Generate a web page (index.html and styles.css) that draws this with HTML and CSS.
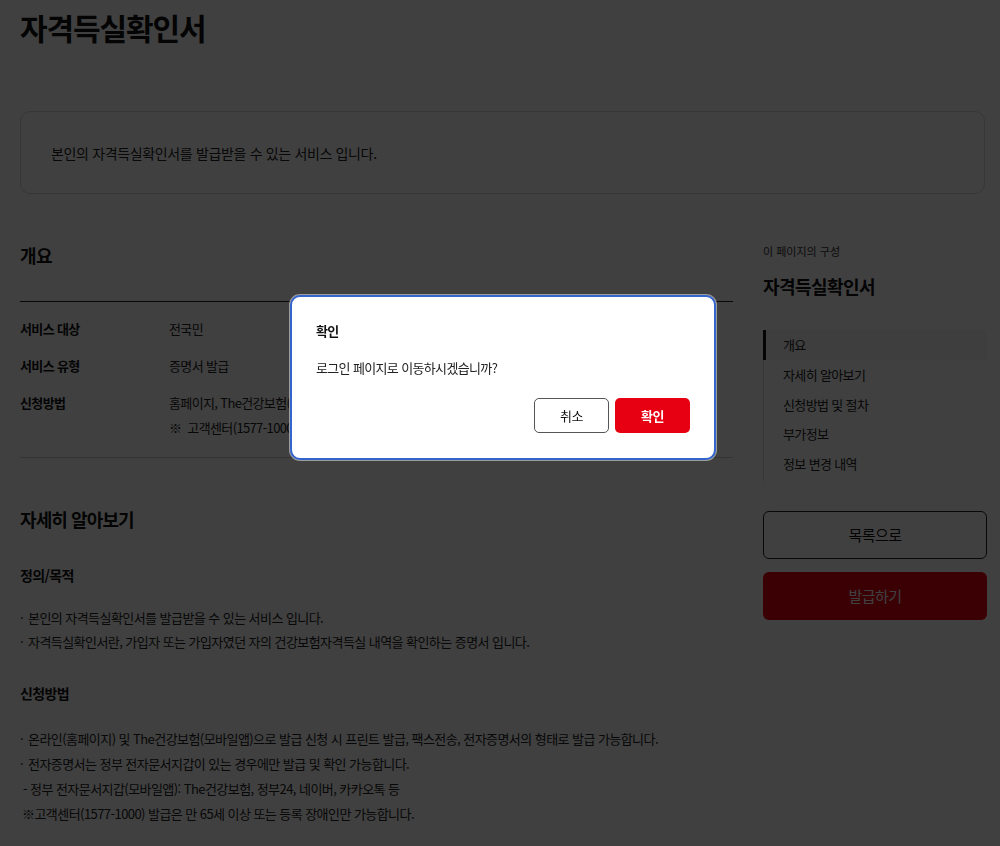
FILE: index.html
```html
<!DOCTYPE html>
<html lang="ko">
<head>
<meta charset="utf-8">
<title>자격득실확인서</title>
<link rel="stylesheet" href="styles.css">
</head>
<body>
<div class="page">
  <h1 class="page-title">자격득실확인서</h1>
  <div class="intro-box">본인의 자격득실확인서를 발급받을 수 있는 서비스 입니다.</div>

  <div class="content">
    <main class="main">
      <h2 class="sec-title">개요</h2>
      <div class="summary">
        <div class="row"><div class="label">서비스 대상</div><div class="value">전국민</div></div>
        <div class="row"><div class="label">서비스 유형</div><div class="value">증명서 발급</div></div>
        <div class="row">
          <div class="label">신청방법</div>
          <div class="value">
            <p>홈페이지, The건강보험(모바일앱), 고객센터</p>
            <p class="second">※ &nbsp;고객센터(1577-1000) 발급은 만 65세 이상 또는 등록 장애인만 가능합니다.</p>
          </div>
        </div>
      </div>

      <h2 class="sec-title big">자세히 알아보기</h2>
      <h3 class="sub-title">정의/목적</h3>
      <ul class="bullets first">
        <li>본인의 자격득실확인서를 발급받을 수 있는 서비스 입니다.</li>
        <li>자격득실확인서란, 가입자 또는 가입자였던 자의 건강보험자격득실 내역을 확인하는 증명서 입니다.</li>
      </ul>
      <h3 class="sub-title sub2">신청방법</h3>
      <ul class="bullets second-list">
        <li>온라인(홈페이지) 및 The건강보험(모바일앱)으로 발급 신청 시 프린트 발급, 팩스전송, 전자증명서의 형태로 발급 가능합니다.</li>
        <li>전자증명서는 정부 전자문서지갑이 있는 경우에만 발급 및 확인 가능합니다.</li>
        <li class="plain dash">- 정부 전자문서지갑(모바일앱): The건강보험, 정부24, 네이버, 카카오톡 등</li>
        <li class="plain">※고객센터(1577-1000) 발급은 만 65세 이상 또는 등록 장애인만 가능합니다.</li>
      </ul>
    </main>

    <aside class="aside">
      <p class="toc-label">이 페이지의 구성</p>
      <p class="toc-title">자격득실확인서</p>
      <ul class="toc">
        <li class="active">개요</li>
        <li>자세히 알아보기</li>
        <li>신청방법 및 절차</li>
        <li>부가정보</li>
        <li>정보 변경 내역</li>
      </ul>
      <button class="btn-line" type="button">목록으로</button>
      <button class="btn-red" type="button">발급하기</button>
    </aside>
  </div>
</div>

<div class="overlay"></div>
<div class="dialog" role="dialog">
  <p class="dlg-title">확인</p>
  <p class="dlg-msg">로그인 페이지로 이동하시겠습니까?</p>
  <div class="dlg-actions">
    <button class="dlg-cancel" type="button">취소</button>
    <button class="dlg-ok" type="button">확인</button>
  </div>
</div>
</body>
</html>
```
FILE: styles.css
```css
* { box-sizing: border-box; }
html, body { margin: 0; padding: 0; }
body {
  font-family: "Noto Sans CJK KR", "Noto Sans", sans-serif;
  color: #1a1a1a;
  background: #fff;
  width: 1000px;
  height: 846px;
  overflow: hidden;
  letter-spacing: -0.04em;
}
p, ul, h1, h2, h3 { margin: 0; padding: 0; }
ul { list-style: none; }

.page { padding: 0 13px 0 20px; }

.page-title {
  font-size: 30px;
  line-height: 44px;
  font-weight: 700;
  letter-spacing: -1.1px;
  padding-top: 5px;
  color: #111;
}

.intro-box {
  margin-top: 62px;
  width: 965px;
  height: 83px;
  border: 1px solid #d6d6d6;
  border-radius: 10px;
  padding: 0 30px;
  display: flex;
  align-items: center;
  font-size: 14px;
  letter-spacing: -0.35px;
  color: #222;
}

.content {
  display: flex;
  gap: 30px;
}

.main { width: 713px; flex: none; }

.sec-title {
  margin-top: 48px;
  font-size: 18px;
  line-height: 26px;
  font-weight: 700;
  color: #111;
}
.sec-title.big {
  margin-top: 48px;
  font-size: 18px;
  line-height: 26px;
  letter-spacing: -0.9px;
}

.summary {
  margin-top: 33px;
  border-top: 1px solid #222;
  border-bottom: 1px solid #d0d0d0;
  padding: 16px 0 18px;
}
.row {
  display: flex;
  font-size: 13px;
  line-height: 22px;
  margin-bottom: 15px;
}
.row:last-child { margin-bottom: 0; }
.label { width: 149px; flex: none; font-weight: 700; color: #111; }
.value { color: #222; white-space: nowrap; }
.value .second { margin-top: 3px; }

.sub-title {
  margin-top: 32px;
  font-size: 14px;
  line-height: 22px;
  font-weight: 700;
  color: #111;
}
.sub-title.sub2 { margin-top: 28px; }

.bullets { font-size: 13px; color: #222; letter-spacing: -0.043em; }
.bullets.first { margin-top: 20px; }
.bullets.first li { line-height: 24px; }
.bullets.second-list { margin-top: 22px; }
.bullets.second-list li { line-height: 25px; }
.bullets li { position: relative; padding-left: 8px; }
.bullets li::before {
  content: "·";
  position: absolute;
  left: 0;
  top: 0;
}
.bullets li.plain { padding-left: 2px; }
.bullets li.dash { padding-left: 3px; }
.bullets li.plain::before { content: none; }

.aside { width: 224px; flex: none; padding-top: 50px; }
.toc-label { font-size: 11px; line-height: 14px; color: #333; letter-spacing: 0; }
.toc-title {
  margin-top: 15px;
  font-size: 18px;
  line-height: 26px;
  font-weight: 700;
  letter-spacing: -0.03em;
  color: #111;
}
.toc {
  margin-top: 31px;
  border-left: 1px solid #d8d8d8;
  padding-bottom: 2px;
}
.toc li {
  font-size: 13px;
  line-height: 29.8px;
  padding-left: 19px;
  color: #222;
}
.toc li.active {
  background: #f6f6f6;
  box-shadow: inset 3px 0 0 #111;
  margin-left: -1px;
  padding-left: 20px;
}

.btn-line, .btn-red {
  display: block;
  width: 224px;
  height: 48px;
  border-radius: 6px;
  font-family: inherit;
  font-size: 15px;
  letter-spacing: -0.04em;
  cursor: pointer;
}
.btn-line {
  margin-top: 30px;
  background: #fff;
  border: 1px solid #222;
  color: #111;
}
.btn-red {
  margin-top: 13px;
  background: #e60012;
  border: none;
  color: #fff;
}

.overlay {
  position: fixed;
  inset: 0;
  background: rgba(0, 0, 0, 0.75);
}

.dialog {
  position: fixed;
  left: 290px;
  top: 295px;
  width: 426px;
  height: 165px;
  background: #fff;
  border: 2px solid #3465cf;
  box-shadow: 0 0 0 1px #9c9c9c;
  border-radius: 10px;
  padding: 24px 24px 0;
}
.dlg-title { font-size: 13px; line-height: 20px; font-weight: 700; color: #111; }
.dlg-msg { margin-top: 17px; font-size: 13px; line-height: 20px; color: #222; letter-spacing: -0.05em; }
.dlg-actions {
  margin-top: 20px;
  display: flex;
  justify-content: flex-end;
  gap: 6px;
}
.dlg-cancel, .dlg-ok {
  width: 75px;
  height: 35px;
  border-radius: 5px;
  font-family: inherit;
  font-size: 13px;
  letter-spacing: -0.04em;
}
.dlg-cancel { background: #fff; border: 1px solid #555; color: #111; }
.dlg-ok { background: #e60012; border: none; color: #fff; font-weight: 700; }
```
